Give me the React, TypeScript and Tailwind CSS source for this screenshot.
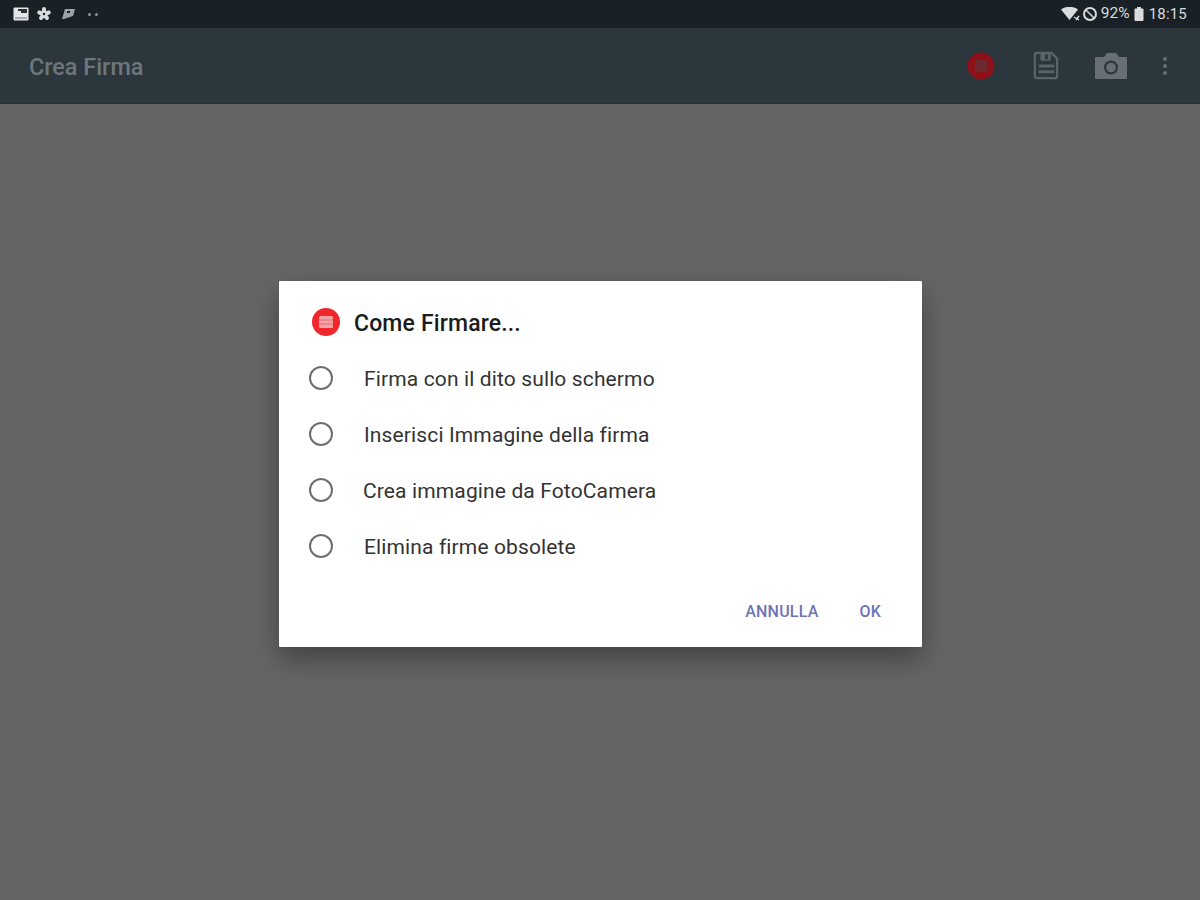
import React from "react";

const font = { fontFamily: 'Roboto, "Noto Sans", sans-serif' };

function Radio() {
  return <span className="block w-[24px] h-[24px] rounded-full border-2 border-[#6f6f6f] bg-white shrink-0" />;
}

function Option({ label, gap }: { label: string; gap: string }) {
  return (
    <div className="flex items-center h-[56px]">
      <Radio />
      <span className={`${gap} mt-[2px] text-[21px] leading-none text-[#333333] whitespace-nowrap tracking-[0.13px]`}>{label}</span>
    </div>
  );
}

export default function App() {
  return (
    <div className="w-[1200px] h-[900px] flex flex-col overflow-hidden bg-[#656565]" style={font}>
      <div className="h-[28px] bg-[#1a2126] flex items-center justify-between pl-[13px] pr-[13px] shrink-0">
        <div className="flex items-center gap-[7px]">
          <svg width="16" height="14" viewBox="0 0 16 14">
            <rect x="0.5" y="0.5" width="15" height="13" rx="1" fill="#e4e6e7" />
            <rect x="2" y="2" width="12" height="8" fill="#e4e6e7" />
            <path d="M5 2h9v4H8V4H5z" fill="#2a3035" />
            <rect x="2" y="10" width="12" height="2" fill="#a8acae" />
          </svg>
          <svg width="16" height="16" viewBox="0 0 16 16" stroke="#d8dadb" strokeWidth="4" strokeLinecap="round">
            <path d="M8 8V3M8 8L3.2 6.5M8 8l4.8-1.5M8 8l-3 4M8 8l3 4" />
            <circle cx="8" cy="8" r="1.2" fill="#1a2126" stroke="none" />
          </svg>
          <svg width="15" height="12" viewBox="0 0 15 12" fill="#9ea2a4" className="ml-[2px]">
            <path d="M4 1h10l-2 7-9 3H1z" />
            <rect x="6" y="3" width="3" height="2" fill="#1a2126" />
          </svg>
          <span className="flex gap-[4px] ml-[5px]">
            <span className="w-[3px] h-[3px] bg-[#8d9295] rounded-full" />
            <span className="w-[3px] h-[3px] bg-[#8d9295] rounded-full" />
          </span>
        </div>
        <div className="flex items-center text-[#d9dbdc]">
          <svg width="20" height="14" viewBox="0 0 20 14" fill="#d9dbdc">
            <path d="M0 2.5C5-1 12-1 17 2.5L8.5 13z" />
            <path d="M13 10l5 3M18 9l-3 4" stroke="#d9dbdc" strokeWidth="1.4" />
          </svg>
          <svg width="16" height="16" viewBox="0 0 16 16" fill="none" stroke="#d9dbdc" className="ml-[1px]">
            <circle cx="8" cy="8" r="6" strokeWidth="2" />
            <path d="M4 4l8 8" strokeWidth="1.4" />
          </svg>
          <span className="text-[15.5px] leading-none ml-[3px]">92%</span>
          <svg width="10" height="14" viewBox="0 0 10 14" fill="#d9dbdc" className="ml-[4px]">
            <rect x="3" y="0" width="4" height="2" />
            <rect x="0.5" y="1.5" width="9" height="12.5" rx="1" />
          </svg>
          <span className="text-[15px] leading-none ml-[5px] tracking-[0.2px]">18:15</span>
        </div>
      </div>

      <div className="h-[76px] bg-[#2b363d] border-b border-[#262f35] flex items-center shrink-0 pl-[29px]">
        <span className="text-[23.4px] leading-none font-medium text-[#6e767b] mt-[5px]">Crea Firma</span>
        <div className="ml-auto flex items-center">
          <svg width="28" height="28" viewBox="0 0 28 28">
            <circle cx="14" cy="14" r="13.5" fill="#8e1119" />
            <rect x="8" y="8" width="12" height="12" rx="1" fill="#6c2a30" />
          </svg>
          <svg width="26" height="29" viewBox="0 0 28 30" preserveAspectRatio="none" fill="none" className="ml-[38px]">
            <path d="M2 3.5a1.5 1.5 0 0 1 1.5-1.5H20l6 6v18.5a1.5 1.5 0 0 1-1.5 1.5h-21A1.5 1.5 0 0 1 2 26.5z" stroke="#5a6368" strokeWidth="2.4" />
            <rect x="8" y="2" width="11" height="8" fill="#5a6368" />
            <rect x="13" y="3.5" width="3" height="5" fill="#2b363d" />
            <rect x="6" y="14" width="17" height="3" fill="#5a6368" />
            <rect x="6" y="20" width="17" height="3" fill="#5a6368" />
          </svg>
          <svg width="34" height="28" viewBox="0 0 34 28" className="ml-[35px]">
            <path d="M2 5h8l3-4h9l3 4h7a1 1 0 0 1 1 1v20a1 1 0 0 1-1 1H2a1 1 0 0 1-1-1V6a1 1 0 0 1 1-1z" fill="#687075" />
            <circle cx="17" cy="15.5" r="7" fill="#2b363d" />
            <circle cx="17" cy="15.5" r="4.8" fill="#687075" />
          </svg>
          <div className="ml-[35px] mr-[33px] flex flex-col gap-[3px]">
            <span className="block w-[4px] h-[4px] bg-[#687075] rounded-full" />
            <span className="block w-[4px] h-[4px] bg-[#687075] rounded-full" />
            <span className="block w-[4px] h-[4px] bg-[#687075] rounded-full" />
          </div>
        </div>
      </div>

      <div className="flex-1 flex justify-center items-start pt-[177px]">
        <div className="w-[643px] h-[366px] bg-white rounded-[1px] shadow-[0_12px_28px_rgba(0,0,0,0.35)] pl-[30px] pt-[26px] pr-[41px] flex flex-col ml-[1px]">
          <div className="flex items-center h-[30px]">
            <svg width="28" height="28" viewBox="0 0 28 28" className="ml-[3px] shrink-0">
              <circle cx="14" cy="14" r="14" fill="#f0282e" />
              <rect x="7" y="8" width="14" height="12" rx="1.5" fill="#f3a3a6" />
              <path d="M7 12h14M7 16h14" stroke="#ea6a6e" strokeWidth="1" />
            </svg>
            <span className="ml-[14px] mt-[3px] text-[23px] leading-none font-medium text-[#1b1b1b] tracking-[0.15px]">Come Firmare...</span>
          </div>
          <div className="mt-[13px] flex flex-col">
            <Option label="Firma con il dito sullo schermo" gap="ml-[31px]" />
            <Option label="Inserisci Immagine della firma" gap="ml-[31px]" />
            <Option label="Crea immagine da FotoCamera" gap="ml-[30px]" />
            <Option label="Elimina firme obsolete" gap="ml-[31px]" />
          </div>
          <div className="mt-[30px] flex justify-end items-center gap-[41px] text-[16px] leading-none font-medium text-[#6f74b8] tracking-[0.2px]">
            <span>ANNULLA</span>
            <span>OK</span>
          </div>
        </div>
      </div>
    </div>
  );
}
